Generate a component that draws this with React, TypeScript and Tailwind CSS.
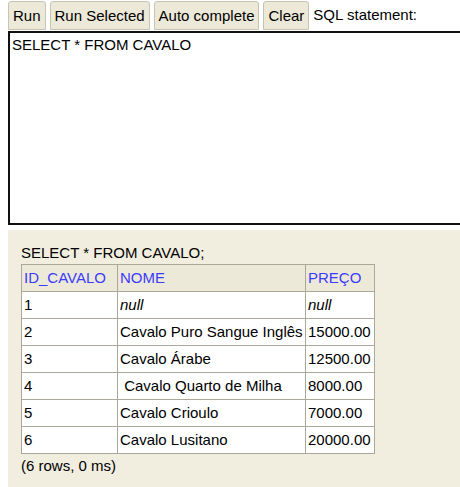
import React from "react";

const rows = [
  { id: "1", nome: "null", preco: "null", isNull: true },
  { id: "2", nome: "Cavalo Puro Sangue Inglês", preco: "15000.00" },
  { id: "3", nome: "Cavalo Árabe", preco: "12500.00" },
  { id: "4", nome: " Cavalo Quarto de Milha", preco: "8000.00" },
  { id: "5", nome: "Cavalo Crioulo", preco: "7000.00" },
  { id: "6", nome: "Cavalo Lusitano", preco: "20000.00" },
];

const Btn = ({ label }: { label: string }) => (
  <button className="h-[29px] px-[4px] bg-[#ece9d8] border border-[#c7c3b3] rounded-t-[3px] text-[15px] text-black leading-none">
    {label}
  </button>
);

export default function App() {
  return (
    <div
      className="w-[460px] h-[487px] overflow-hidden bg-white text-black"
      style={{ fontFamily: '"Liberation Sans", Arial, sans-serif' }}
    >
      <div className="pl-[8px] w-[480px]">
        {/* toolbar */}
        <div className="flex items-center gap-[4px] pt-[1px] h-[30px]">
          <Btn label="Run" />
          <Btn label="Run Selected" />
          <Btn label="Auto complete" />
          <Btn label="Clear" />
          <span className="text-[15px]">SQL statement:</span>
        </div>

        {/* editor */}
        <div className="mt-[1px] h-[194px] border-2 border-[#111] bg-white px-[2px] pt-[3px] text-[15px] leading-[18px]">
          SELECT * FROM CAVALO
        </div>

        {/* result panel */}
        <div className="mt-[5px] h-[260px] bg-[#f1eddf] pl-[13px] pt-[14px] text-[15px]">
          <div className="leading-[18px] mb-[2px]">SELECT * FROM CAVALO;</div>
          <table className="border-collapse">
            <thead>
              <tr className="h-[27px] bg-[#ece9d8]">
                <th className="w-[96px] border border-[#aca899] px-[2px] text-left font-normal text-[#3b3bff]">ID_CAVALO</th>
                <th className="w-[188px] border border-[#aca899] px-[2px] text-left font-normal text-[#3b3bff]">NOME</th>
                <th className="w-[69px] border border-[#aca899] px-[2px] text-left font-normal text-[#3b3bff]">PREÇO</th>
              </tr>
            </thead>
            <tbody>
              {rows.map((r) => (
                <tr key={r.id} className="h-[27px] bg-white">
                  <td className="border border-[#aca899] px-[2px]">{r.id}</td>
                  <td className={`border border-[#aca899] px-[2px] whitespace-pre ${r.isNull ? "italic" : ""}`}>{r.nome}</td>
                  <td className={`border border-[#aca899] px-[2px] ${r.isNull ? "italic" : ""}`}>{r.preco}</td>
                </tr>
              ))}
            </tbody>
          </table>
          <div className="mt-[3px] leading-[18px]">(6 rows, 0 ms)</div>
        </div>
      </div>
    </div>
  );
}
